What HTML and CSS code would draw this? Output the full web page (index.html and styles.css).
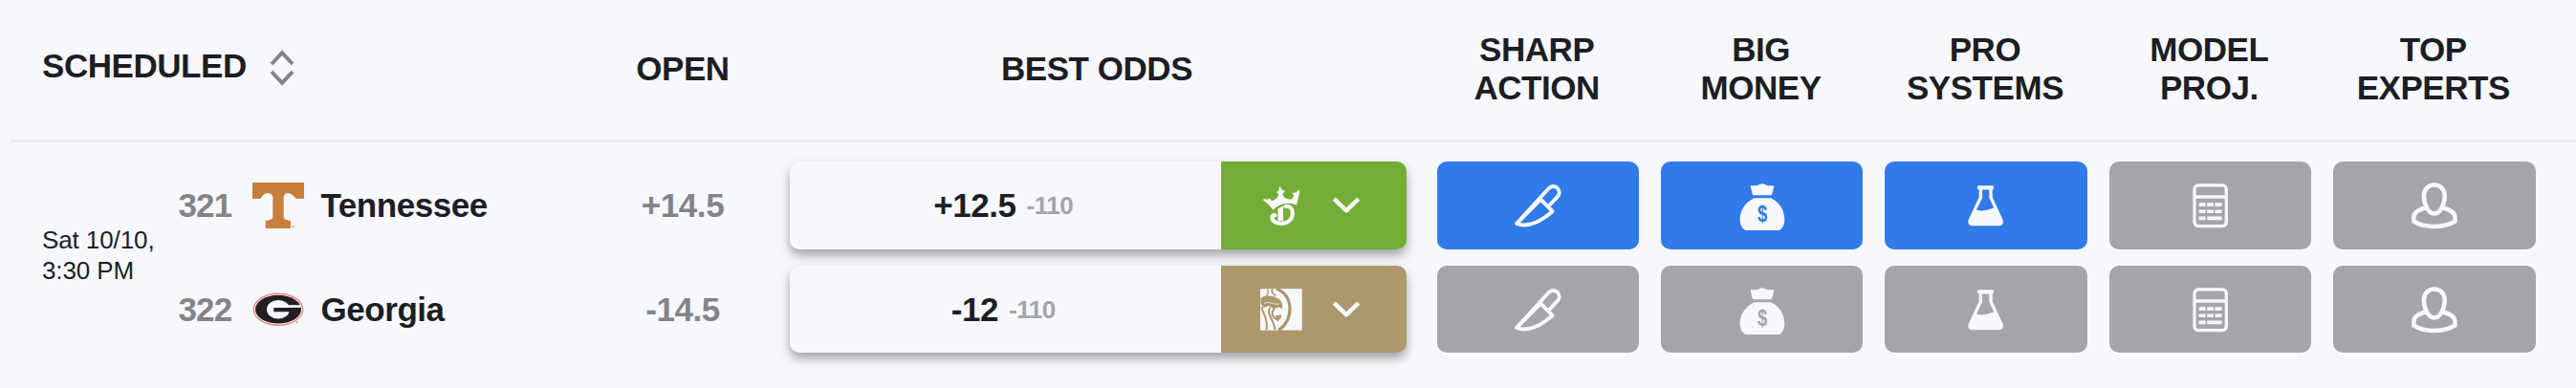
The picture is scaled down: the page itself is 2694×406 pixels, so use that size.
FILE: index.html
```html
<!DOCTYPE html>
<html lang="en">
<head>
<meta charset="utf-8">
<title>Odds board</title>
<link rel="stylesheet" href="styles.css">
</head>
<body>
<svg class="sprite" aria-hidden="true">
  <symbol id="knife" viewBox="0 0 60 60">
    <path class="line" stroke-width="3.9" d="M8 49 41.5 12.3C44.5 9.2 48.2 9.3 50.7 11.8 53.4 14.5 53.4 18.2 50.6 21.1L41.2 31M33.3 23.7 45.6 36.2C35 45 22 54 8 49Z"/>
  </symbol>
  <symbol id="bag" viewBox="0 0 60 60">
    <path class="solid" d="M18.6 9.2H24C26.5 8.8 27.5 7.2 30 7.2S33.500 8.800 36 9.200H41.500Q42.500 9.200 42.200 10.300L40.200 18.200Q40 19.200 39 19.200H21Q20 19.200 19.800 18.200L17.700 10.300Q17.500 9.200 18.600 9.200ZM21.600 22.200H39C49 27 53.300 36 53.300 44.600 53.300 49.500 51.500 54 48 56H12.300C8.500 54 6.600 49.500 6.600 44.600 6.600 36 11.500 27 21.600 22.200Z"/>
    <text class="dollar" x="25" y="46.500" textLength="10.200" lengthAdjust="spacingAndGlyphs">$</text>
  </symbol>
  <symbol id="flask" viewBox="0 0 60 60">
    <path class="solid" d="M22 9.200H36.800Q38 9.200 38 10.400V11.600Q38 13.200 36.700 13.400V21.200L47.400 44.500C49 48.500 46.800 51.300 43.500 51.300H15.800C12.500 51.300 10.300 48.500 11.900 44.500L22.700 21.200V13.400Q20.900 13.200 20.900 11.600V10.400Q20.900 9.200 22 9.200ZM26.100 13.400V22L20 34.600C25.500 36.500 30 35 38.200 32.400L33.300 22V13.400Z" fill-rule="evenodd"/>
  </symbol>
  <symbol id="calc" viewBox="0 0 60 60">
    <rect class="line" stroke-width="3.300" x="13" y="8.900" width="33.300" height="42.700" rx="4"/>
    <path class="solid" d="M13 19.200H46V22.700H13ZM17.600 27.300H24.600V31H17.600ZM26.200 27.300H33V31H26.200ZM34.400 27.300H41.600V31H34.400ZM17.600 34.500H24.600V38.100H17.600ZM26.200 34.500H33V38.100H26.200ZM34.400 34.500H41.600V38.100H34.400ZM17.600 41.600H24.600V45.200H17.600ZM26.200 41.600H41.600V45.200H26.200Z"/>
  </symbol>
  <symbol id="person" viewBox="0 0 60 60">
    <path class="line" stroke-width="4.500" d="M29.800 8.600C36 8.600 40.700 13 40.700 20 40.700 29 36 38.500 29.800 38.500S18.900 29 18.900 20C18.900 13 23.600 8.600 29.800 8.600ZM20.500 32.500C13 34.500 8.300 38 8.300 42.500V46.500C20 53.800 40 53.800 51.500 46.500V42.500C51.500 38 46.500 34.500 39 32.500"/>
  </symbol>
  <symbol id="chevron" viewBox="0 0 30 20">
    <path class="line" stroke-width="4.500" stroke-linejoin="miter" d="M2.300 3.200 15 15.400 27.700 3.200"/>
  </symbol>
</svg>

<main class="board">
  <header class="columns head">
    <div class="th th-sched">SCHEDULED
      <svg class="sort" viewBox="0 0 26 38"><path d="M2 15 13 3.200 24 15M2 23 13 34.800 24 23"/></svg>
    </div>
    <div class="th single">OPEN</div>
    <div class="th single">BEST ODDS</div>
    <div class="th">SHARP<br>ACTION</div>
    <div class="th">BIG<br>MONEY</div>
    <div class="th">PRO<br>SYSTEMS</div>
    <div class="th">MODEL<br>PROJ.</div>
    <div class="th">TOP<br>EXPERTS</div>
    <div class="th"></div>
  </header>

  <section class="columns game">
    <div class="matchup">
      <div class="date">Sat 10/10,<br>3:30 PM</div>
      <div class="stack">
        <div class="team">
          <span class="rot">321</span>
          <svg class="logo" viewBox="0 0 54 48"><path fill="#c97f3c" d="M0 0H54V17H45.500C42 13 40 11.300 37.500 11.300 34.500 11.300 32.700 12.800 32.700 15.500V35.500C32.700 38.500 35.500 39.500 40 39.800V48H13.700V39.800C18.500 39.500 21.300 38.500 21.300 35.500V15.500C21.300 12.800 19 11.300 16 11.300 13 11.300 11 13 8.300 17H0Z"/><circle cx="42.700" cy="46" r="1.500" fill="#e2bb98"/></svg>
          <span class="name">Tennessee</span>
        </div>
        <div class="team">
          <span class="rot">322</span>
          <svg class="logo" viewBox="0 0 54 48">
            <ellipse cx="27" cy="23.700" rx="25.700" ry="16.500" fill="#f7f8fd" stroke="#ee8a83" stroke-width="1.500"/>
            <ellipse cx="27" cy="23.700" rx="24" ry="14.900" fill="#231f20"/>
            <ellipse cx="27" cy="23.700" rx="12" ry="9.800" fill="#f7f8fd"/>
            <path fill="#231f20" d="M22.300 22H50V26.200H42L38.500 29.500V26.200H22.300Z"/>
            <path fill="#f7f8fd" d="M34 19.200H50.500V21.900H34Z"/>
            <circle cx="46.500" cy="37.500" r="1.100" fill="#a5a4a9"/>
          </svg>
          <span class="name">Georgia</span>
        </div>
      </div>
    </div>

    <div class="stack">
      <div class="open">+14.5</div>
      <div class="open">-14.5</div>
    </div>

    <div class="stack odds">
      <div class="offer">
        <div class="line-value"><b>+12.5</b><small>-110</small></div>
        <div class="book green">
          <svg class="brand" viewBox="0 0 60 60">
            <path class="solid" d="M10.300 23.700 13.500 23.300 17 24.800 15.500 22.300 18.500 23.300 20 25.200C23.500 24.500 26.500 22 27.300 18L24.600 16 27.300 14.600 28.200 9.600 30.600 13.600 34.200 15 31.300 17.700C32 21.500 35.500 24 41 23.400L43 20 41.500 16.800 45 16.500 49.300 13 48.700 18.300 46 29.600C43 28.300 40 27.800 37.500 27.800 31 28 25 30.500 21.500 34.800 19 31.500 15 27 10.300 23.700Z"/>
            <path class="solid" d="M26.400 33.500 32 30.500V46H26.400Z"/>
            <path class="line" stroke-width="4.200" stroke-linecap="round" d="M34.500 31C39.500 30.500 41.800 33.500 41.800 38 41.800 44.800 36.500 48.900 30 48.900 24 48.900 20.500 46 20.500 42.500 20.500 40.700 22 39.800 23.300 40.300"/>
          </svg>
          <svg class="chev"><use href="#chevron"/></svg>
        </div>
      </div>
      <div class="offer">
        <div class="line-value"><b>-12</b><small>-110</small></div>
        <div class="book tan">
          <svg class="brand" viewBox="0 0 60 60">
            <rect class="solid" x="8" y="8.200" width="43.700" height="43.400"/>
            <g class="mane">
              <path stroke-width="3.200" d="M25 8.300C34 11.500 39 19.500 39 29 39 39 34.500 46.500 27 51.600"/>
              <path stroke-width="1.500" d="M15.500 8.300C17 11 16 14.500 13.500 16.500M20.500 8.300C19.500 11.500 21 14 24.500 15.500"/>
              <path stroke-width="2" d="M9.500 27C10 34 16.500 38 14.500 51M18.500 27.500C13.500 34 22 40 23.500 51M23 28.500C19 33 19.500 38 27.500 41.500"/>
            </g>
            <path class="face" d="M8.500 18C12 14.500 21 14.500 27 18.500 30.500 20.500 31.800 25 31 29L27.500 27.500 22 29 17 26 11.500 28 8.500 24ZM23.500 36 30.500 35.500 29 40 25.500 40.500Z"/>
            <path class="glint" d="M12 23.500C17 20.500 22 25.500 28 24"/>
          </svg>
          <svg class="chev"><use href="#chevron"/></svg>
        </div>
      </div>
    </div>

    <div class="stack signal">
      <div class="tile on"><svg><use href="#knife"/></svg></div>
      <div class="tile"><svg><use href="#knife"/></svg></div>
    </div>
    <div class="stack signal">
      <div class="tile on"><svg><use href="#bag"/></svg></div>
      <div class="tile"><svg><use href="#bag"/></svg></div>
    </div>
    <div class="stack signal">
      <div class="tile on"><svg><use href="#flask"/></svg></div>
      <div class="tile"><svg><use href="#flask"/></svg></div>
    </div>
    <div class="stack signal">
      <div class="tile"><svg><use href="#calc"/></svg></div>
      <div class="tile"><svg><use href="#calc"/></svg></div>
    </div>
    <div class="stack signal">
      <div class="tile"><svg><use href="#person"/></svg></div>
      <div class="tile"><svg><use href="#person"/></svg></div>
    </div>
  </section>
</main>
</body>
</html>
```

FILE: styles.css
```css
* { box-sizing: border-box; }

body {
  margin: 0;
  background: #f7f8fd;
  color: #1d1e23;
  font-family: "Liberation Sans", Arial, sans-serif;
  font-size: 35px;
  line-height: 40px;
  letter-spacing: -0.45px;
}

.sprite { display: none; }

.board {
  height: 406px;
  padding-left: 11px;
  overflow: hidden;
}

.columns {
  display: grid;
  grid-template-columns: 614.5px 180px 686px repeat(5, 234.4px) 1fr;
}

.head { height: 149px; }

.th {
  display: flex;
  align-items: center;
  justify-content: center;
  padding: 0 3px 2px 0;
  border-bottom: 3px solid #ecedf2;
  font-weight: 700;
  text-align: center;
}

.th-sched {
  justify-content: flex-start;
  padding: 0 0 8px 33px;
}

.single { padding-bottom: 2px; }

.sort {
  width: 26px;
  height: 38px;
  margin: 4px 0 0 24px;
  fill: none;
  stroke: #848389;
  stroke-width: 4;
}

.game { padding-top: 20px; }

.stack {
  display: flex;
  flex-direction: column;
  gap: 17.3px;
}

.matchup {
  display: flex;
  align-items: center;
  padding-left: 33px;
}

.date {
  width: 142.5px;
  padding-bottom: 4px;
  font-size: 26px;
  line-height: 32px;
  letter-spacing: -0.1px;
}

.team {
  display: flex;
  align-items: center;
  height: 91.5px;
  font-weight: 700;
}

.rot {
  width: 77px;
  color: #848389;
  letter-spacing: -0.9px;
}

.logo {
  width: 54px;
  height: 48px;
  margin-right: 18px;
}

.open {
  display: flex;
  align-items: center;
  justify-content: center;
  height: 91.5px;
  padding-right: 3px;
  color: #848389;
  font-weight: 700;
}

.odds { padding: 0 20.5px 0 20px; }

.offer {
  display: flex;
  height: 91.5px;
  border-radius: 10px;
  background: #f7f8fd;
  box-shadow: 0 6px 11px rgba(0, 0, 0, 0.35);
  overflow: hidden;
}

.line-value {
  display: flex;
  flex: 1;
  align-items: center;
  justify-content: center;
  gap: 11px;
  padding-right: 4px;
}

.line-value small {
  color: #a5a4a9;
  font-size: 26px;
  font-weight: 700;
}

.book {
  display: flex;
  align-items: center;
  width: 194px;
  padding-left: 33px;
}

.green { background: #74ad36; }
.tan { background: #ac986c; }

.brand { width: 60px; height: 60px; }
.chev { width: 30px; height: 20px; margin-left: 23px; }

.signal { padding: 0 11.8px 0 11.2px; }

.tile {
  display: flex;
  align-items: center;
  justify-content: center;
  height: 91.5px;
  border-radius: 10px;
  background: #a5a4a9;
  color: #a5a4a9;
}

.tile.on { background: #317ae9; color: #317ae9; }
.tile svg { width: 60px; height: 60px; }

.solid { fill: #f7f8fd; }

.line {
  fill: none;
  stroke: #f7f8fd;
  stroke-linejoin: round;
}

.dollar {
  fill: currentColor;
  font-size: 24px;
  font-weight: 700;
  letter-spacing: 0;
}

.mane { fill: none; stroke: #ac986c; }
.face { fill: #ac986c; }
.glint { fill: none; stroke: #f7f8fd; stroke-width: 0.8; }
```
